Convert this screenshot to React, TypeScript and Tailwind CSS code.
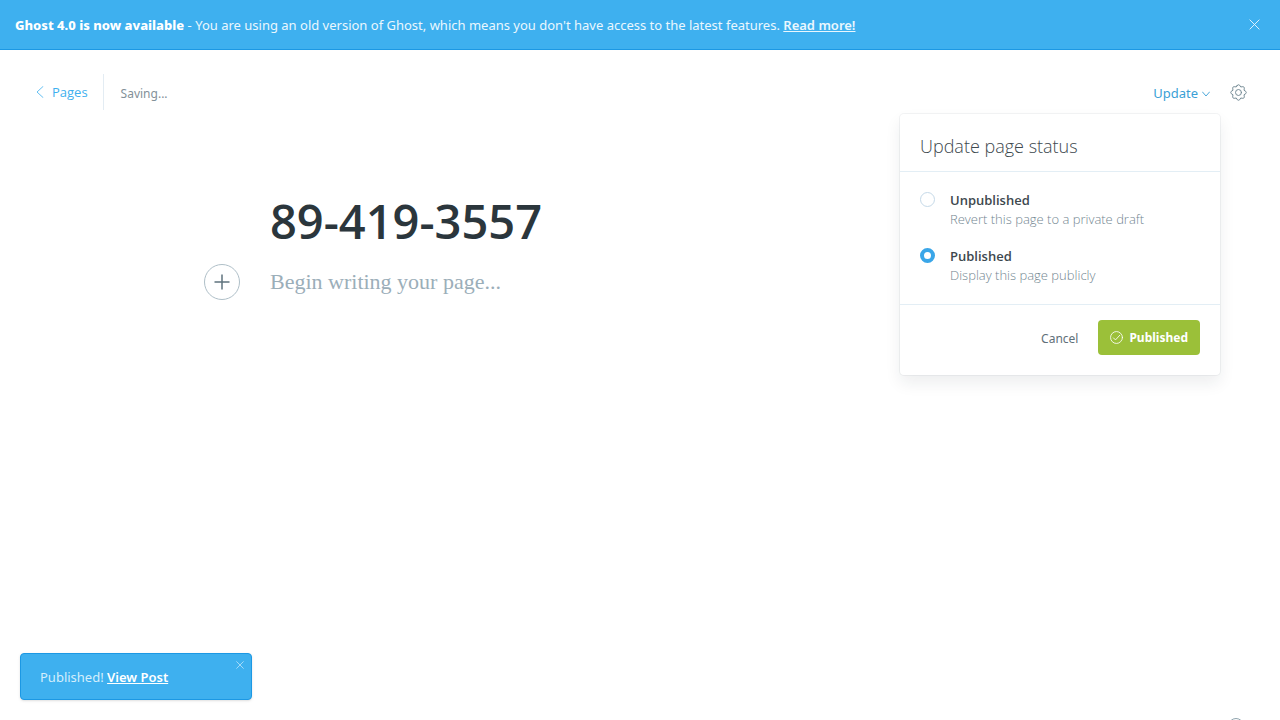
import { useState } from "react";

function CloseIcon({ className }: { className: string }) {
  return (
    <svg viewBox="0 0 12 12" className={className} fill="none" stroke="currentColor" aria-hidden="true">
      <path d="M1 1l10 10M11 1L1 11" strokeLinecap="round" />
    </svg>
  );
}

function GearIcon() {
  return (
    <svg viewBox="0 0 24 24" className="size-[17px]" fill="none" stroke="currentColor" strokeWidth="1.4" strokeLinecap="round" strokeLinejoin="round" aria-hidden="true">
      <circle cx="12" cy="12" r="4.2" />
      <path d="M9.9 2.600a2.200 2.200 0 0 1 4.200 0q.7 2.600 3.100 1.300a2.200 2.200 0 0 1 2.900 2.900q-1.300 2.400 1.300 3.100a2.200 2.200 0 0 1 0 4.200q-2.600.7-1.300 3.100a2.200 2.200 0 0 1-2.900 2.900q-2.400-1.300-3.100 1.300a2.200 2.200 0 0 1-4.200 0q-.7-2.600-3.100-1.300a2.200 2.200 0 0 1-2.900-2.900q1.300-2.400-1.300-3.100a2.200 2.200 0 0 1 0-4.200q2.600-.7 1.300-3.100a2.200 2.200 0 0 1 2.900-2.900q2.400 1.300 3.100-1.300z" />
    </svg>
  );
}

function StatusOption({ id, label, description, checked, onSelect }: { id: string; label: string; description: string; checked: boolean; onSelect: () => void }) {
  return (
    <div className="flex items-start gap-[15px]">
      <input
        type="radio"
        id={id}
        name="page-status"
        checked={checked}
        onChange={onSelect}
        className="mt-px size-[15px] shrink-0 appearance-none rounded-full border border-[#c5d9e8] bg-white checked:border-4 checked:border-[#3aa6e8]"
      />
      <label htmlFor={id} className="flex flex-col">
        <span className="text-[13px] leading-[18px] font-semibold text-[#3d484e]">{label}</span>
        <span className="text-[13px] leading-5 font-light text-[#738691]">{description}</span>
      </label>
    </div>
  );
}

export default function App() {
  const [status, setStatus] = useState("published");
  const [title, setTitle] = useState("89-419-3557");

  return (
    <div className="relative flex h-screen flex-col overflow-hidden bg-white font-['Noto_Sans','Open_Sans',sans-serif] text-[13px] text-[#3d484e]">
      <aside className="flex h-[50px] shrink-0 items-center justify-between border-b border-[#1c98e4] bg-[#3eb0ef] pr-5 pl-[15px] text-[#eaf7fe]">
        <p className="leading-5">
          <strong className="font-extrabold text-white">Ghost 4.0 is now available</strong> - You are using an old version of Ghost, which means you don't have access to the latest features.{" "}
          <a href="#upgrade" className="font-semibold underline">Read more!</a>
        </p>
        <button type="button" aria-label="Close announcement">
          <CloseIcon className="size-[11px]" />
        </button>
      </aside>

      <header className="flex shrink-0 items-center justify-between pt-6 pr-[33px] pl-9">
        <div className="flex h-9 items-center">
          <a href="#pages" className="flex h-full items-center gap-2 border-r border-[#e3ecf3] pr-[15px] font-['Open_Sans','Noto_Sans',sans-serif] text-[#3eb0ef]">
            <svg viewBox="0 0 8 12" className="h-3 w-2" fill="none" stroke="currentColor" strokeWidth="0.8" strokeLinecap="round" aria-hidden="true">
              <path d="M7 0.5L1 6l6 5.5" />
            </svg>
            <span className="pt-[2px]">Pages</span>
          </a>
          <span className="pt-[3px] pl-[17px] text-[12px] text-[#839199]">Saving...</span>
        </div>
        <div className="flex items-center gap-5">
          <div className="relative">
            <button type="button" aria-expanded="true" className="flex h-6 items-center gap-1 pt-[3px] text-[13px] text-[#3a9fd6]">
              Update
              <svg viewBox="0 0 8 6" className="h-[6px] w-2" fill="none" stroke="currentColor" strokeWidth="0.9" strokeLinecap="round" aria-hidden="true">
                <path d="M0.5 1L4 5l3.5-4" />
              </svg>
            </button>
            <section
              aria-label="Update page status"
              className="absolute top-[34px] -right-[10px] z-10 w-80 rounded bg-white font-['Open_Sans','Noto_Sans',sans-serif] shadow-[0_0_0_1px_rgba(99,114,130,0.08),0_8px_16px_rgba(27,39,51,0.08)]"
            >
              <h2 className="border-b border-[#e3eef5] px-5 pt-5 pb-[13px] text-[18px] leading-6 font-light">Update page status</h2>
              <div className="flex flex-col gap-[18px] px-5 pt-[19px] pb-[19px]">
                <StatusOption id="unpublished" label="Unpublished" description="Revert this page to a private draft" checked={status === "unpublished"} onSelect={() => setStatus("unpublished")} />
                <StatusOption id="published" label="Published" description="Display this page publicly" checked={status === "published"} onSelect={() => setStatus("published")} />
              </div>
              <div className="flex items-center justify-end gap-5 border-t border-[#e3eef5] px-5 pt-[15px] pb-5 font-['Noto_Sans','Open_Sans',sans-serif] text-[12px]">
                <button type="button" className="pt-[2px] text-[#5f7079]">Cancel</button>
                <button type="button" className="flex h-[35px] items-center gap-[6px] rounded bg-[#9bc039] px-3 font-bold text-white">
                  <svg viewBox="0 0 14 14" className="size-[13px]" fill="none" stroke="currentColor" strokeWidth="0.9" strokeLinecap="round" strokeLinejoin="round" aria-hidden="true">
                    <circle cx="7" cy="7" r="6.4" />
                    <path d="M3.7 7.4l2.200 2.200 4.600-5" />
                  </svg>
                  <span className="pt-px">Published</span>
                </button>
              </div>
            </section>
          </div>
          <button type="button" aria-label="Settings" className="text-[#738a94]">
            <GearIcon />
          </button>
        </div>
      </header>

      <main className="mx-auto flex w-full max-w-[740px] flex-col pt-[81px]">
        <input
          aria-label="Page title"
          value={title}
          onChange={(e) => setTitle(e.target.value)}
          className="h-[60px] w-full font-['Open_Sans','Noto_Sans',sans-serif] text-[47px] font-semibold text-[#2b363c] outline-none"
        />
        <div className="-ml-[66px] flex items-center gap-[30px] pt-[13px]">
          <button type="button" aria-label="Add a card" className="flex size-9 shrink-0 items-center justify-center rounded-full border border-[#afbfc8] text-[#5f737d]">
            <svg viewBox="0 0 16 16" className="size-4" fill="none" stroke="currentColor" strokeWidth="1.5" aria-hidden="true">
              <path d="M8 0.5v15M0.5 8h15" />
            </svg>
          </button>
          <input
            aria-label="Page content"
            placeholder="Begin writing your page..."
            className="h-9 w-full font-['Georgia','Liberation_Serif',serif] text-[22px] outline-none placeholder:text-[#9baeb9]"
          />
        </div>
      </main>

      <div role="status" className="absolute bottom-5 left-5 flex h-[47px] w-[232px] items-center rounded border border-[#1c98e4] bg-[#3eb0ef] px-[19px] pt-[2px] text-[#d4eefc] shadow-sm">
        <p>
          Published! <a href="#post" className="font-semibold text-white underline">View Post</a>
        </p>
        <button type="button" aria-label="Close notification" className="absolute top-[7px] right-[7px]">
          <CloseIcon className="size-2" />
        </button>
      </div>

      <button type="button" aria-label="Help" className="absolute right-9 -bottom-[14px] size-4 rounded-full border border-[#8fa3ad]" />
    </div>
  );
}
